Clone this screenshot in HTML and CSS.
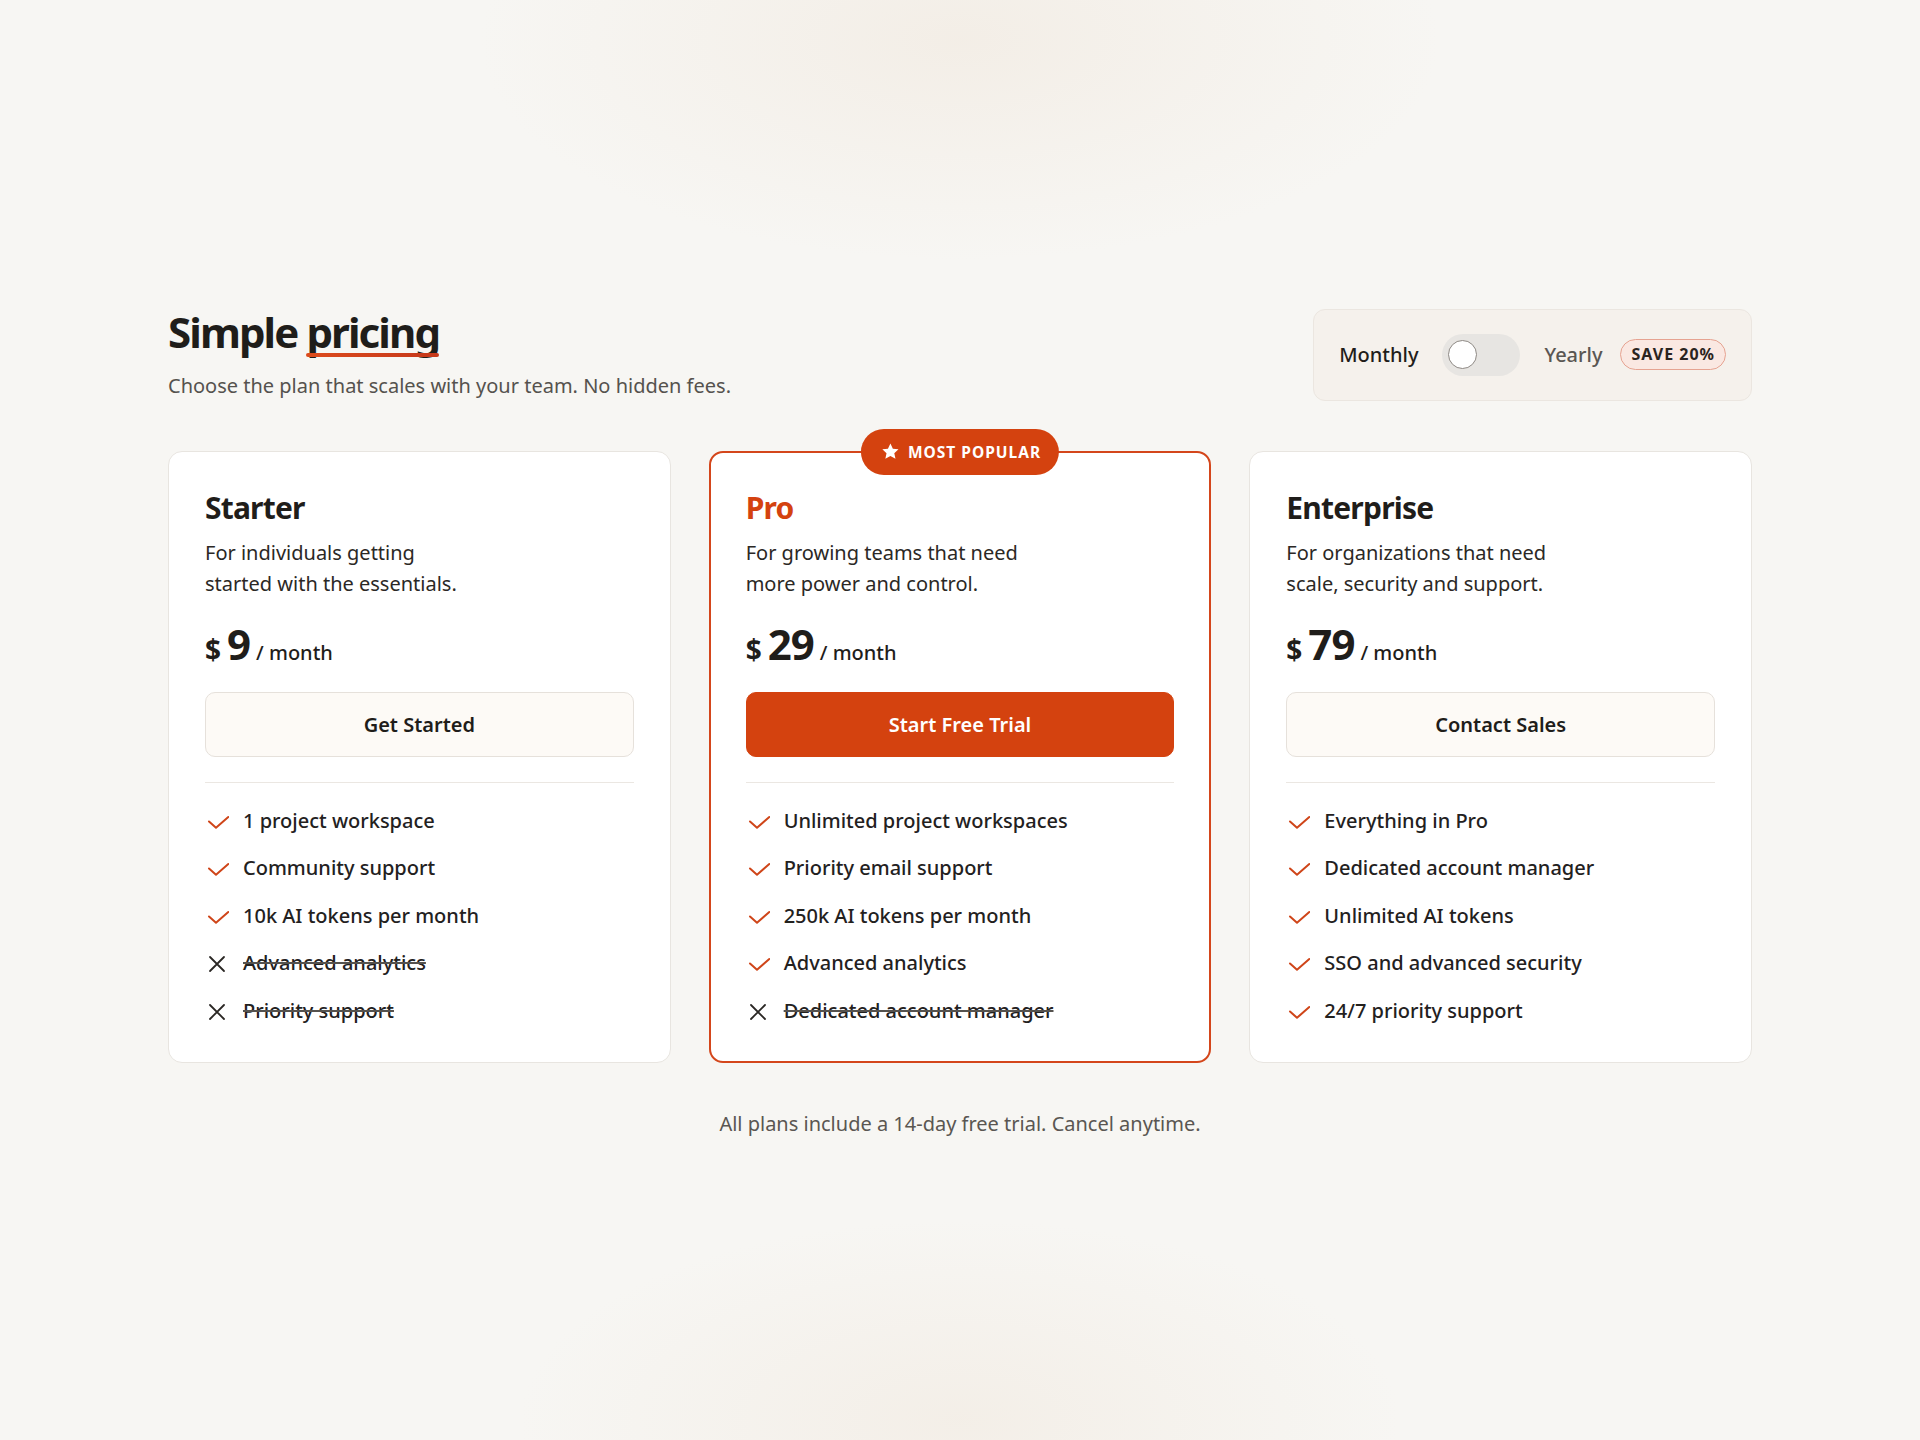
FILE: index.html
```html
<!DOCTYPE html>
<html lang="en">
<head>
  <meta charset="UTF-8" />
  <meta name="viewport" content="width=device-width, initial-scale=1.0" />
  <title>Simple pricing</title>
  <link rel="stylesheet" href="styles.css">
</head>
<body>

  <main class="pricing">
    <header class="pricing-head">
      <div class="intro">
        <h1 class="title">Simple <span class="title-mark">pricing</span></h1>
        <p class="lead">Choose the plan that scales with your team. No hidden fees.</p>
      </div>
      <div class="billing">
        <span class="billing-opt active">Monthly</span>
        <span class="switch"><span class="knob"></span></span>
        <span class="billing-opt">Yearly</span>
        <span class="save">SAVE 20%</span>
      </div>
    </header>

    <section class="plans">
      <!-- Starter -->
      <article class="plan">
        <h2 class="plan-name">Starter</h2>
        <p class="plan-desc">For individuals getting<br>started with the essentials.</p>
        <div class="price"><span class="cur">$</span><span class="amount">9</span><span class="per">/ month</span></div>
        <a class="btn" href="#">Get Started</a>
        <ul class="features">
          <li><svg class="ico ico-yes" viewBox="0 0 24 24"><path d="M4 12.5l7 6.3L23.3 8"/></svg>1 project workspace</li>
          <li><svg class="ico ico-yes" viewBox="0 0 24 24"><path d="M4 12.5l7 6.3L23.3 8"/></svg>Community support</li>
          <li><svg class="ico ico-yes" viewBox="0 0 24 24"><path d="M4 12.5l7 6.3L23.3 8"/></svg>10k AI tokens per month</li>
          <li class="off"><svg class="ico ico-no" viewBox="0 0 24 24"><path d="M5 6l14 14M19 6L5 20"/></svg><s>Advanced analytics</s></li>
          <li class="off"><svg class="ico ico-no" viewBox="0 0 24 24"><path d="M5 6l14 14M19 6L5 20"/></svg><s>Priority support</s></li>
        </ul>
      </article>

      <!-- Pro -->
      <article class="plan plan-featured">
        <span class="popular">
          <svg class="star" viewBox="0 0 24 24"><path d="M12 1.8l3.1 6.6 7.1.8-5.3 4.9 1.5 7.1L12 17.6l-6.4 3.6 1.5-7.1-5.3-4.9 7.1-.8z"/></svg>
          MOST POPULAR
        </span>
        <h2 class="plan-name">Pro</h2>
        <p class="plan-desc">For growing teams that need<br>more power and control.</p>
        <div class="price"><span class="cur">$</span><span class="amount">29</span><span class="per">/ month</span></div>
        <a class="btn btn-primary" href="#">Start Free Trial</a>
        <ul class="features">
          <li><svg class="ico ico-yes" viewBox="0 0 24 24"><path d="M4 12.5l7 6.3L23.3 8"/></svg>Unlimited project workspaces</li>
          <li><svg class="ico ico-yes" viewBox="0 0 24 24"><path d="M4 12.5l7 6.3L23.3 8"/></svg>Priority email support</li>
          <li><svg class="ico ico-yes" viewBox="0 0 24 24"><path d="M4 12.5l7 6.3L23.3 8"/></svg>250k AI tokens per month</li>
          <li><svg class="ico ico-yes" viewBox="0 0 24 24"><path d="M4 12.5l7 6.3L23.3 8"/></svg>Advanced analytics</li>
          <li class="off"><svg class="ico ico-no" viewBox="0 0 24 24"><path d="M5 6l14 14M19 6L5 20"/></svg><s>Dedicated account manager</s></li>
        </ul>
      </article>

      <!-- Enterprise -->
      <article class="plan">
        <h2 class="plan-name">Enterprise</h2>
        <p class="plan-desc">For organizations that need<br>scale, security and support.</p>
        <div class="price"><span class="cur">$</span><span class="amount">79</span><span class="per">/ month</span></div>
        <a class="btn" href="#">Contact Sales</a>
        <ul class="features">
          <li><svg class="ico ico-yes" viewBox="0 0 24 24"><path d="M4 12.5l7 6.3L23.3 8"/></svg>Everything in Pro</li>
          <li><svg class="ico ico-yes" viewBox="0 0 24 24"><path d="M4 12.5l7 6.3L23.3 8"/></svg>Dedicated account manager</li>
          <li><svg class="ico ico-yes" viewBox="0 0 24 24"><path d="M4 12.5l7 6.3L23.3 8"/></svg>Unlimited AI tokens</li>
          <li><svg class="ico ico-yes" viewBox="0 0 24 24"><path d="M4 12.5l7 6.3L23.3 8"/></svg>SSO and advanced security</li>
          <li><svg class="ico ico-yes" viewBox="0 0 24 24"><path d="M4 12.5l7 6.3L23.3 8"/></svg>24/7 priority support</li>
        </ul>
      </article>
    </section>

    <p class="note">All plans include a 14-day free trial. Cancel anytime.</p>
  </main>

</body>
</html>
```

FILE: styles.css
```css
html {
  background: #f7f6f3;
}
body {
  margin: 0;
  min-height: 100vh;
  display: flex;
  align-items: center;
  justify-content: center;
  font-family: "Noto Sans", "Open Sans", sans-serif;
  color: #1f1d1a;
  background:
    radial-gradient(ellipse 480px 220px at 50% 40px, rgba(240, 231, 220, 0.55), rgba(240, 231, 220, 0)),
    radial-gradient(ellipse 440px 200px at 50% 1420px, rgba(240, 231, 220, 0.5), rgba(240, 231, 220, 0)),
    #f7f6f3;
}

.pricing {
  width: 1584px;
  padding-top: 5px;
}

/* header */
.pricing-head {
  display: flex;
  justify-content: space-between;
  align-items: flex-end;
  margin-bottom: 50px;
}
.title {
  margin: 0;
  font-size: 42px;
  line-height: 1.22;
  font-weight: 700;
  letter-spacing: -1.9px;
}
.title-mark {
  position: relative;
}
.title-mark::after {
  content: "";
  position: absolute;
  left: 0;
  right: 0;
  bottom: 3px;
  height: 4px;
  border-radius: 2px;
  background: linear-gradient(90deg, #dc4b1d, #c5381a);
}
.lead {
  margin: 13px 0 0;
  font-size: 20px;
  line-height: 30px;
  color: #55524e;
}

.billing {
  display: flex;
  align-items: center;
  gap: 24px;
  padding: 24px 25px;
  background: #f5f1ec;
  border: 1px solid #ebe6e0;
  border-radius: 12px;
}
.billing-opt {
  font-size: 20px;
  font-weight: 500;
  color: #5a5652;
}
.billing-opt.active {
  color: #1f1d1a;
}
.switch {
  display: flex;
  align-items: center;
  width: 78px;
  height: 42px;
  padding: 0 6px;
  box-sizing: border-box;
  border-radius: 21px;
  background: #e7e5e2;
}
.knob {
  width: 29px;
  height: 29px;
  box-sizing: border-box;
  border-radius: 50%;
  background: #fff;
  border: 1px solid #8d8883;
}
.save {
  margin-left: -6px;
  padding: 5px 10px;
  font-size: 16px;
  line-height: 19px;
  font-weight: 700;
  letter-spacing: 1px;
  color: #2a2420;
  background: #fae8e2;
  border: 1px solid #e6a391;
  border-radius: 999px;
}

/* cards */
.plans {
  display: grid;
  grid-template-columns: repeat(3, 1fr);
  gap: 38px;
}
.plan {
  position: relative;
  padding: 37px 36px 37px;
  background: #fff;
  border: 1px solid #e8e5e0;
  border-radius: 14px;
}
.plan-featured {
  padding: 36px 35px 36px;
  border: 2px solid #d4461b;
}
.popular {
  position: absolute;
  top: -24px;
  left: 50%;
  transform: translateX(-50%);
  display: flex;
  align-items: center;
  gap: 8px;
  height: 46px;
  padding: 0 18px 0 20px;
  box-sizing: border-box;
  border-radius: 23px;
  background: #d4420f;
  color: #fff;
  font-size: 15.5px;
  font-weight: 700;
  letter-spacing: 1px;
  white-space: nowrap;
}
.star {
  width: 19px;
  height: 19px;
  fill: #fff;
}
.plan-name {
  margin: 0;
  font-size: 30px;
  line-height: 1.25;
  font-weight: 700;
  letter-spacing: -0.8px;
}
.plan-featured .plan-name {
  color: #d4420f;
}
.plan-desc {
  margin: 11px 0 0;
  font-size: 20px;
  line-height: 31px;
  color: #2b2825;
}
.price {
  display: flex;
  align-items: baseline;
  gap: 6px;
  margin-top: 24px;
  line-height: 1;
  font-weight: 700;
}
.cur {
  font-size: 28px;
}
.amount {
  font-size: 42px;
  letter-spacing: -1px;
}
.per {
  font-size: 20px;
  font-weight: 500;
}
.btn {
  display: flex;
  align-items: center;
  justify-content: center;
  height: 65px;
  margin-top: 27px;
  box-sizing: border-box;
  border: 1px solid #e6e1db;
  border-radius: 10px;
  background: #fdfaf6;
  color: #1f1d1a;
  font-size: 20px;
  font-weight: 600;
  text-decoration: none;
}
.btn-primary {
  background: #d4420f;
  border-color: #d4420f;
  color: #fff;
}

.features {
  list-style: none;
  margin: 25px 0 0;
  padding: 24px 0 0;
  border-top: 1px solid #ebe7e2;
  display: flex;
  flex-direction: column;
  gap: 19.4px;
}
.features li {
  display: flex;
  align-items: center;
  gap: 14px;
  font-size: 20px;
  line-height: 28px;
  font-weight: 500;
  color: #23211e;
}
.ico {
  width: 24px;
  height: 24px;
  flex: none;
  fill: none;
  stroke-width: 2;
  stroke-linecap: round;
  stroke-linejoin: round;
}
.ico-yes {
  stroke: #cf4519;
}
.ico-no {
  stroke: #2a2724;
  stroke-width: 1.8;
}
.features s {
  text-decoration-thickness: 2px;
  text-decoration-color: #55524e;
}

.note {
  margin: 46px 0 0;
  text-align: center;
  font-size: 20px;
  line-height: 30px;
  color: #5a5652;
}
```
